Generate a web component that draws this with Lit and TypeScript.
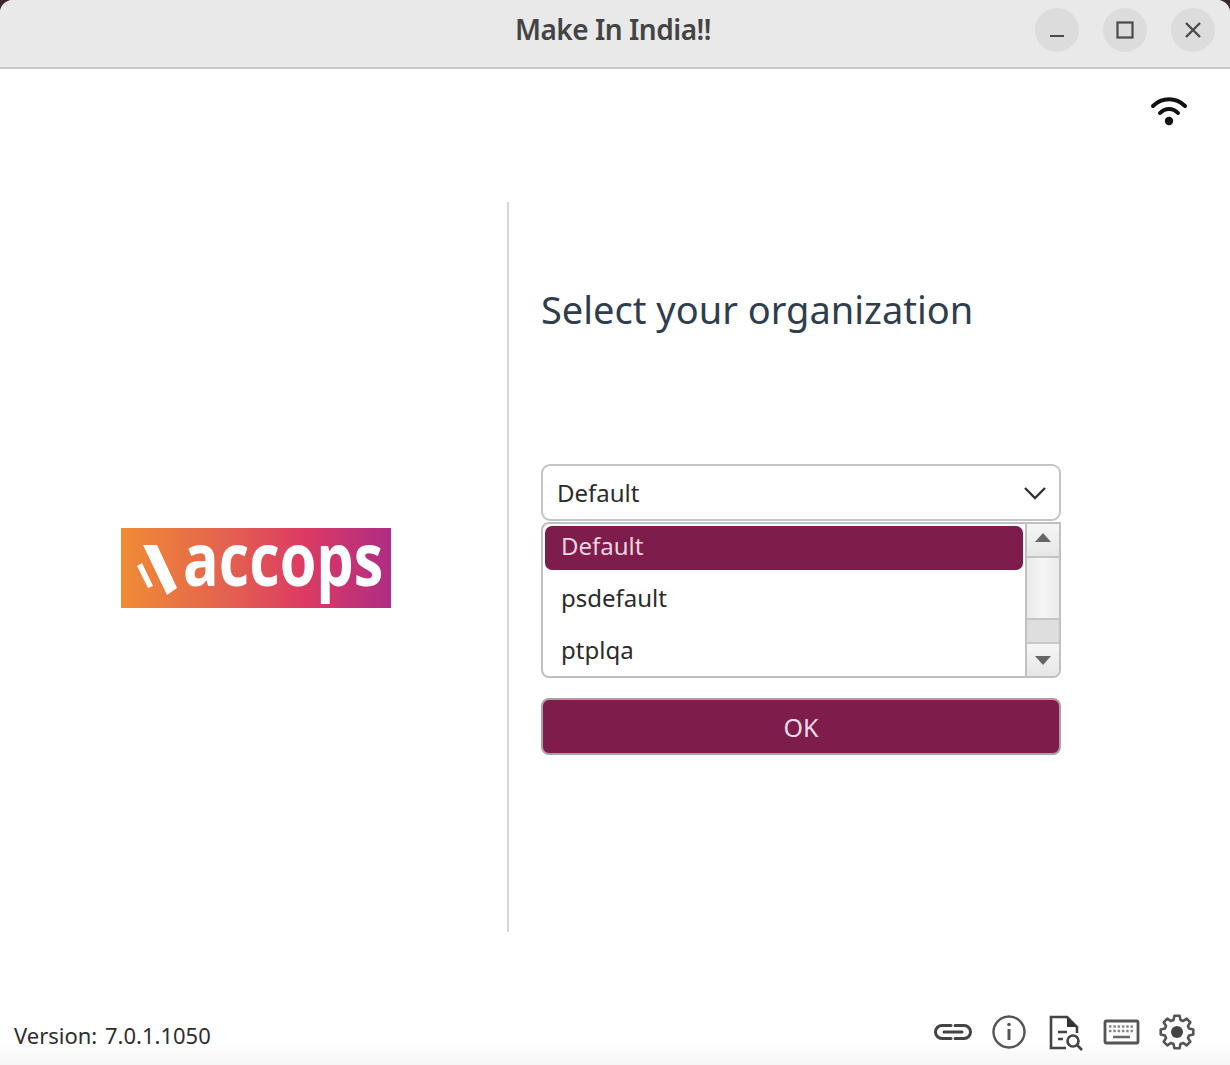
import { LitElement, html, css } from "lit";
import { customElement } from "lit/decorators.js";

const gearPath = (() => {
  const teeth = 8;
  const cx = 20;
  const cy = 20;
  const points: string[] = [];
  for (let i = 0; i < teeth; i++) {
    const a = (i * 2 * Math.PI) / teeth - Math.PI / 2;
    const step = (2 * Math.PI) / teeth;
    const polar = (r: number, t: number) =>
      `${(cx + r * Math.cos(t)).toFixed(2)} ${(cy + r * Math.sin(t)).toFixed(2)}`;
    points.push(polar(12.5, a - step * 0.36), polar(16.5, a - step * 0.2), polar(16.5, a + step * 0.2), polar(12.5, a + step * 0.36));
  }
  return `M${points.join("L")}Z`;
})();

@customElement("app-root")
export class AppRoot extends LitElement {
  static styles = css`
    :host { display: block; width: 1230px; height: 1065px; background: #3a2a2a; font-family: "Noto Sans", "Open Sans", sans-serif; overflow: hidden; }
    .window { width: 1230px; height: 1065px; background: #fff; border-radius: 13px 13px 0 0; overflow: hidden; display: flex; flex-direction: column; }
    .titlebar { flex: none; background: #e9e9e9; border-bottom: 2px solid #c9c9c9; box-sizing: border-box; height: 69px; display: flex; align-items: flex-start; justify-content: flex-end; position: relative; padding: 8px 15px 0 0; gap: 24px; }
    .title { position: absolute; left: 0; right: 4px; top: 9px; text-align: center; font-size: 28px; font-weight: 600; color: #444; line-height: 40px; letter-spacing: -0.5px; }
    .wb { width: 44px; height: 44px; border-radius: 50%; background: #dcdcdc; display: flex; align-items: center; justify-content: center; position: relative; }
    .wb svg { display: block; }
    .status { height: 133px; flex: none; display: flex; justify-content: flex-end; padding: 26px 42px 0 0; box-sizing: border-box; }
    .content { height: 730px; flex: none; display: grid; grid-template-columns: 509px 1fr; }
    .left { border-right: 2px solid #d4d6d8; display: flex; padding: 326px 0 0 121px; box-sizing: border-box; }
    .logo { width: 270px; height: 80px; background: linear-gradient(90deg, #f08c35 0%, #e4604f 40%, #dc3a63 68%, #b02c85 100%); display: flex; align-items: center; padding-left: 15px; box-sizing: border-box; }
    .logo svg { flex: none; }
    .logo-text { flex: none; color: #fff; font-family: "Open Sans", sans-serif; font-weight: 700; font-size: 74px; line-height: 80px; margin-top: -21px; transform: scaleX(0.8); transform-origin: left center; white-space: nowrap; }
    .right { padding: 81px 0 0 32px; width: 552px; box-sizing: border-box; }
    h1 { margin: 0; font-size: 38px; font-weight: 400; line-height: 52px; color: #2f3e4e; height: 181px; }
    .select { height: 57px; box-sizing: border-box; border: 2px solid #c4c4c4; border-radius: 9px; display: flex; align-items: center; justify-content: space-between; padding: 0 12px 0 14px; font-size: 24px; color: #2b2b2b; background: #fff; }
    .list { margin-top: 1px; height: 156px; box-sizing: border-box; border: 2px solid #c0c0c0; border-radius: 8px 0 8px 8px; display: flex; overflow: hidden; background: #fff; }
    .items { flex: 1; padding: 2px 2px 0 2px; }
    .item { height: 44px; margin-bottom: 8px; padding-left: 16px; font-size: 24px; line-height: 40px; color: #2b2b2b; border-radius: 7px; }
    .item.sel { background: #7e1c4b; color: #ead5df; }
    .sb { width: 32px; flex: none; border-left: 2px solid #c0c0c0; display: flex; flex-direction: column; background: #ececec; }
    .sb-btn { flex: none; display: flex; align-items: center; justify-content: center; background: linear-gradient(#f6f6f6, #e6e6e6); }
    .sb-btn svg { display: block; }
    .sb-btn.up { border-bottom: 2px solid #c4c4c4; height: 34px; box-sizing: border-box; padding-bottom: 5px; }
    .sb-btn.down { border-top: 2px solid #c8c8c8; height: 34px; box-sizing: border-box; }
    .thumb { height: 60px; flex: none; background: linear-gradient(90deg, #e9e9e9, #f5f5f5 50%, #ebebeb); }
    .track { flex: 1; background: #dedede; border-top: 2px solid #c4c4c4; }
    .ok { display: block; margin-top: 20px; width: 100%; height: 57px; box-sizing: border-box; border: 2px solid #a9a0a5; border-radius: 8px; background: #7e1c4b; color: #ecdbe3; font-family: inherit; font-size: 25px; line-height: 1; padding: 2px 0 0; }
    .footer { flex: 1; display: flex; align-items: flex-start; justify-content: space-between; padding: 72px 33px 0 14px; background: linear-gradient(#fff 0 82%, #f6f6f6 100%); }
    .version { font-size: 22px; color: #2e2e2e; line-height: 58px; margin-top: 2px; word-spacing: 2px; white-space: nowrap; }
    .icons { display: flex; gap: 16px; padding-top: 8px; }
    .icons svg { display: block; width: 40px; height: 40px; }
  `;

  render() {
    return html`
      <div class="window">
        <div class="titlebar">
          <div class="title">Make In India!!</div>
          <div class="wb"><svg width="18" height="18" viewBox="0 0 18 18"><path d="M2 15h14" stroke="#4a4a4a" stroke-width="2.2" fill="none"/></svg></div>
          <div class="wb"><svg width="18" height="18" viewBox="0 0 18 18"><rect x="1.5" y="1.5" width="15" height="15" stroke="#4a4a4a" stroke-width="2.2" fill="none"/></svg></div>
          <div class="wb"><svg width="18" height="18" viewBox="0 0 18 18"><path d="M2 2l14 14M16 2L2 16" stroke="#4a4a4a" stroke-width="2.4" fill="none"/></svg></div>
        </div>
        <div class="status">
          <svg width="38" height="32" viewBox="0 0 38 32"><g fill="none" stroke="#111" stroke-width="4" stroke-linecap="round"><path d="M3 11C12 2 26 2 35 11"/><path d="M10 18C15 12.500 23 12.500 28 18"/></g><circle cx="19" cy="26" r="4.200" fill="#111"/></svg>
        </div>
        <div class="content">
          <div class="left">
            <div class="logo">
              <svg width="47" height="56" viewBox="0 0 47 56"><path d="M7 5h14l20 43-10 7zM1 26l5-3 11 23-5 2z" fill="#fff"/></svg>
              <span class="logo-text">accops</span>
            </div>
          </div>
          <div class="right">
            <h1>Select your organization</h1>
            <div class="select">
              <span>Default</span>
              <svg width="24" height="16" viewBox="0 0 24 16"><path d="M2 3l10 10L22 3" fill="none" stroke="#333" stroke-width="2.400"/></svg>
            </div>
            <div class="list">
              <div class="items">
                <div class="item sel">Default</div>
                <div class="item">psdefault</div>
                <div class="item">ptplqa</div>
              </div>
              <div class="sb">
                <div class="sb-btn up"><svg width="16" height="9" viewBox="0 0 16 9"><path d="M8 0l8 9H0z" fill="#666"/></svg></div>
                <div class="thumb"></div>
                <div class="track"></div>
                <div class="sb-btn down"><svg width="16" height="9" viewBox="0 0 16 9"><path d="M0 0h16L8 9z" fill="#666"/></svg></div>
              </div>
            </div>
            <button class="ok">OK</button>
          </div>
        </div>
        <div class="footer">
          <div class="version">Version: 7.0.1.1050</div>
          <div class="icons">
            <svg viewBox="0 0 40 40"><g fill="none" stroke="#444" stroke-width="3" stroke-linecap="round"><path d="M18 13.500h-9a6.500 6.500 0 0 0 0 13h9"/><path d="M22 13.500h9a6.500 6.500 0 0 1 0 13h-9"/><path d="M11 20h18"/></g></svg>
            <svg viewBox="0 0 40 40"><circle cx="20" cy="20" r="15.500" fill="none" stroke="#555" stroke-width="2.400"/><circle cx="20" cy="12.500" r="1.800" fill="#555"/><rect x="18.500" y="17" width="3" height="11" fill="#555"/></svg>
            <svg viewBox="0 0 40 40"><g fill="none" stroke="#444" stroke-width="2.600"><path d="M21 36H6V5h16l10 10v6"/><circle cx="28" cy="29" r="5.500"/><path d="M32 33l5 5"/><path d="M13 20h9M13 27h5"/></g><path d="M22 5l10 10H22z" fill="#333"/></svg>
            <svg viewBox="0 0 40 40"><rect x="4" y="9" width="33" height="22" rx="1.500" fill="none" stroke="#555" stroke-width="2.800"/><path d="M8 14.500h25M8 19h25" stroke="#888" stroke-width="2.400" stroke-dasharray="2.500 1.800" fill="none"/><path d="M12 25h17" stroke="#666" stroke-width="2.500"/></svg>
            <svg viewBox="0 0 40 40"><path d="${gearPath}" fill="none" stroke="#555" stroke-width="2.600" stroke-linejoin="round"/><circle cx="20" cy="20" r="6" fill="#444"/></svg>
          </div>
        </div>
      </div>
    `;
  }
}
